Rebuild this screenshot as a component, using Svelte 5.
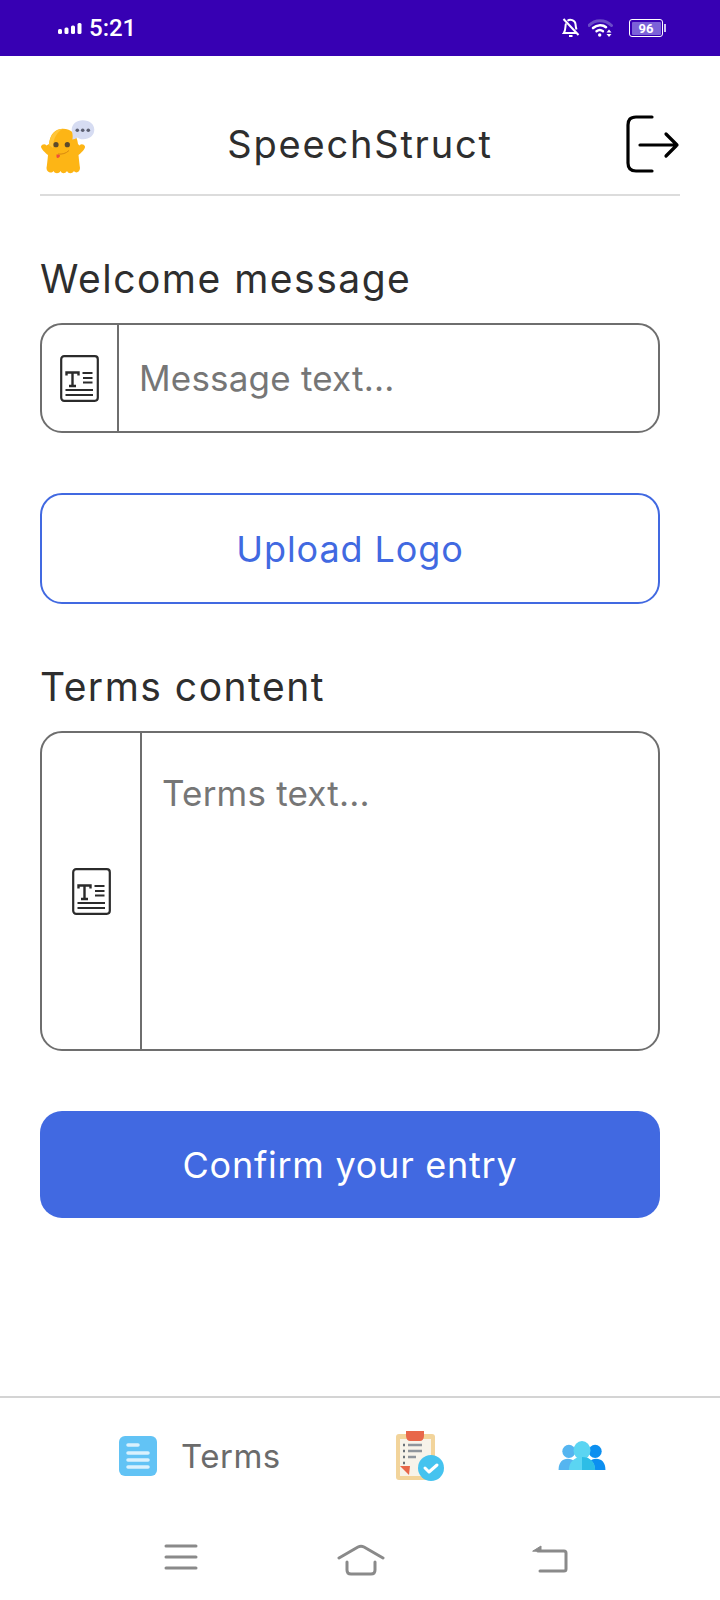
<script lang="ts">
	let message = $state('');
	let terms = $state('');
</script>

{#snippet textIcon()}
	<svg class="text-icon" viewBox="0 0 39 47" width="39" height="47" fill="none" stroke="#2b2b2b">
		<rect x="1.2" y="1.2" width="36.600" height="44.600" rx="3" stroke-width="2.200" />
		<path d="M6.500 20.500v-3h12v3M12.500 17.500v13.500M9 31h7" stroke-width="2.400" />
		<path d="M22.500 18h10M23 23h9.500M23 27.500h9.500M5.500 35h27.500M5.500 40h27.500" stroke-width="2" />
	</svg>
{/snippet}

<div class="screen">
	<div class="status-bar">
		<div class="status-left">
			<svg width="24" height="12" viewBox="0 0 24 12" fill="#fff">
				<rect x="0" y="7" width="4" height="5" rx="1.500" />
				<rect x="6.500" y="5.500" width="4" height="6.500" rx="1.500" />
				<rect x="13" y="3.500" width="4" height="8.500" rx="1.500" />
				<rect x="19.500" y="1" width="4" height="11" rx="1.500" />
			</svg>
			<span class="time">5:21</span>
		</div>
		<div class="status-right">
			<svg width="18" height="20" viewBox="0 0 18 20" fill="none" stroke="#fff" stroke-width="2">
				<path d="M4 5.500C3 8 4 12 1.800 15h13" />
				<path d="M5.500 2.800C8 .8 13 2 13.500 6c.2 2 .3 3.600 1 5.500" />
				<path d="M1.500 1l15 16" />
				<path d="M7 18h3.500" />
			</svg>
			<svg class="wifi" width="26" height="20" viewBox="0 0 26 20" fill="none" stroke-linecap="round">
				<path d="M1 7.500C7 1 17 1 23.500 7.500" stroke="#6a4bc8" stroke-width="3" />
				<path d="M5 10c4-3.600 10-3.600 13 -.8" stroke="#fff" stroke-width="2.600" />
				<path d="M8.500 13.200c2-1.600 4.500-1.600 6.500 0" stroke="#fff" stroke-width="2.400" />
				<circle cx="11.700" cy="17" r="1.700" fill="#fff" />
				<path d="M21 11.500l2.500 3h-5zM21 19l2.500-3h-5z" fill="#fff" />
			</svg>
			<div class="battery">
				<div class="battery-body"><span>96</span></div>
				<div class="battery-tip"></div>
			</div>
		</div>
	</div>

	<main>
		<header>
			<svg class="logo" width="56" height="56" viewBox="0 0 56 56">
				<path d="M9 26C10 16 15 10.700 23 10.700C31 10.700 37 16 38 26L39.500 27.500C41 25.500 44 26 45 28.500C45.500 31 41 35 38.500 37C39 42 39.500 47 40 50C40 54 36 56 34 53C32 56 28.500 56 27 53C25 56 22 56 20.500 53C19 56 15 56 13.500 53C11.500 56 6.500 54.500 6.500 50C7 47 7.500 42 8 37C5.500 35 1 31 1 28.500C2 26 5 25.500 6.500 27.500Z" fill="#fdb515" />
				<path d="M9 27C10 17 15 11 23 10.700C17 14 13 20 13 30z" fill="#ffc63a" />
				<circle cx="16" cy="26.700" r="2.600" fill="#5b4a2c" />
				<circle cx="27.300" cy="26.700" r="2.600" fill="#5b4a2c" />
				<path d="M18 36c4 .5 8-.5 11-3.500" stroke="#d98a10" stroke-width="1" fill="none" />
				<path d="M16.500 36.500c2 0 3.500 0 3.500 1 0 2-3 3.500-3.500 1.500z" fill="#ef4e3a" />
				<path d="M31.700 12c0-6 5-9.700 11-9.700 7 0 11.600 4 11.600 9.500 0 5.700-5 9.500-11 9.500-3 0-4.500-.8-6-1.800-1.500 1-3.500 2-5 2 .6-2 .6-4 -.6-9.500z" fill="#d6dcf2" />
				<circle cx="37.300" cy="12.300" r="1.800" fill="#5c6072" />
				<circle cx="42.700" cy="12.300" r="1.800" fill="#5c6072" />
				<circle cx="48.300" cy="12.300" r="1.800" fill="#5c6072" />
			</svg>
			<h1>SpeechStruct</h1>
			<svg class="logout" width="56" height="58" viewBox="0 0 56 58" fill="none" stroke="#000" stroke-width="3.200" stroke-linecap="round" stroke-linejoin="round">
				<path d="M28 2H12C6 2 4 5 4 10v38c0 5 2 8 8 8h16" />
				<path d="M16 30h37M42 19l11 11-11 11" />
			</svg>
		</header>

		<label class="field-label" for="welcome">Welcome message</label>
		<div class="input-box">
			<div class="icon-cell">{@render textIcon()}</div>
			<input id="welcome" placeholder="Message text..." bind:value={message} />
		</div>

		<button class="upload" type="button">Upload Logo</button>

		<label class="field-label terms-label" for="terms">Terms content</label>
		<div class="input-box textarea-box">
			<div class="icon-cell">{@render textIcon()}</div>
			<textarea id="terms" placeholder="Terms text..." bind:value={terms}></textarea>
		</div>

		<button class="confirm" type="button">Confirm your entry</button>
	</main>

	<nav class="tabs">
		<div class="tab tab-terms">
			<svg width="38" height="40" viewBox="0 0 38 40">
				<rect x="0" y="0" width="38" height="40" rx="6" fill="#62c3f5" />
				<path d="M9 9h10M9 17h20M9 24h20M9 31h20" stroke="#d9f1fd" stroke-width="3.500" stroke-linecap="round" />
			</svg>
			<span>Terms</span>
		</div>
		<svg class="tab-review" width="50" height="50" viewBox="0 0 50 50">
			<rect x="2" y="3" width="39" height="46" rx="3" fill="#f2d49b" />
			<rect x="6" y="8" width="31" height="37" fill="#f7f3ea" />
			<path d="M12 0h18v5c0 3-2 5-4 5h-10c-2 0-4-2-4-5z" fill="#e8674a" />
			<path d="M14 14h14M14 20h14M14 26h8" stroke="#8f959c" stroke-width="2.500" />
			<path d="M9 14h2M9 20h2M9 26h2M9 32h2" stroke="#69727a" stroke-width="2.500" />
			<path d="M6 35l10 0-1 9z" fill="#e8674a" />
			<circle cx="37" cy="37" r="13" fill="#45c3ef" />
			<path d="M31 37l4 4 8-7" stroke="#fff" stroke-width="3" fill="none" stroke-linecap="round" stroke-linejoin="round" />
		</svg>
		<svg class="tab-people" width="48" height="30" viewBox="0 0 50 32">
			<path d="M0 31c0-8 4-12 10-12 3 0 5 1 7 3l-1 9z" fill="#55b5f0" />
			<path d="M50 31c0-8-4-12-10-12-3 0-5 1-7 3l1 9z" fill="#0c8ff0" />
			<circle cx="11" cy="11" r="7" fill="#55b5f0" />
			<circle cx="39" cy="11" r="7" fill="#0c8ff0" />
			<ellipse cx="25" cy="10" rx="9" ry="10" fill="#5bd5f2" />
			<path d="M11 31c0-9 6-14 14-14s14 5 14 14z" fill="#5bd5f2" />
			<path d="M25 17c8 0 14 5 14 14H25z" fill="#2dbde6" />
		</svg>
	</nav>

	<div class="system-nav">
		<svg width="34" height="28" viewBox="0 0 34 28" stroke="#8a8a8a" stroke-width="3" stroke-linecap="round">
			<path d="M2 2h30M2 13h30M2 24h30" />
		</svg>
		<svg class="home" width="48" height="32" viewBox="0 0 48 32" fill="none" stroke="#8a8a8a" stroke-width="3" stroke-linecap="round" stroke-linejoin="round">
			<path d="M2 14L21 3q3-1.500 6 0l19 11" />
			<path d="M10 18v8q0 4 4 4h20q4 0 4-4v-8" />
		</svg>
		<svg class="back" width="36" height="30" viewBox="0 0 36 30" fill="none" stroke="#8a8a8a" stroke-width="3" stroke-linecap="round" stroke-linejoin="round">
			<path d="M6 7h26q2 0 2 2v16q0 2-2 2H8" />
			<path d="M1 7l8-5v5z" fill="#8a8a8a" stroke-width="1" />
		</svg>
	</div>
</div>

<style>
	:global(body) {
		background: #fff;
	}

	.screen {
		width: 720px;
		height: 1600px;
		display: flex;
		flex-direction: column;
		overflow: hidden;
		font-family: Inter, 'Open Sans', sans-serif;
		color: #2e2e2e;
	}

	.status-bar {
		height: 56px;
		flex: none;
		background: #3700b3;
		display: flex;
		justify-content: space-between;
		align-items: center;
		padding: 0 54px 0 58px;
		color: #fff;
		box-sizing: border-box;
	}

	.status-left {
		display: flex;
		align-items: center;
		gap: 7px;
	}

	.time {
		font-family: Roboto, sans-serif;
		font-size: 24px;
		font-weight: 500;
	}

	.status-right {
		display: flex;
		align-items: center;
		gap: 8px;
	}

	.battery {
		display: flex;
		align-items: center;
		margin-left: 7px;
	}

	.battery-body {
		width: 29px;
		height: 13px;
		border: 1.5px solid #fff;
		border-radius: 3px;
		padding: 1.5px;
		box-sizing: content-box;
		display: flex;
	}

	.battery-body span {
		flex: 1;
		background: #7c62d8;
		border-radius: 1px;
		font-family: Roboto, sans-serif;
		font-size: 13px;
		font-weight: 700;
		line-height: 13px;
		text-align: center;
	}

	.battery-tip {
		width: 2px;
		height: 8px;
		background: #cfc4ef;
		margin-left: 1px;
	}

	main {
		flex: 1;
		padding: 0 40px;
		display: flex;
		flex-direction: column;
		align-items: flex-start;
	}

	header {
		width: 640px;
		height: 140px;
		flex: none;
		box-sizing: border-box;
		padding-top: 58px;
		border-bottom: 2px solid #dcdcdc;
		display: flex;
		justify-content: space-between;
		align-items: flex-start;
	}

	.logo {
		margin-top: 4px;
	}

	.logout {
		margin-top: 1px;
	}

	h1 {
		margin: 1px 0 0;
		font-size: 38px;
		font-weight: 400;
		line-height: 58px;
		letter-spacing: 1.8px;
	}

	.field-label {
		margin-top: 60px;
		font-size: 39px;
		line-height: 46px;
		letter-spacing: 1.5px;
		height: 46px;
	}

	.terms-label {
		margin-top: 60px;
	}

	.input-box {
		width: 620px;
		height: 110px;
		margin-top: 21px;
		box-sizing: border-box;
		border: 2px solid #6e6e6e;
		border-radius: 22px;
		display: flex;
		overflow: hidden;
	}

	.icon-cell {
		flex: none;
		width: 75px;
		border-right: 2px solid #6e6e6e;
		display: flex;
		align-items: center;
		justify-content: center;
	}

	input,
	textarea {
		flex: 1;
		min-width: 0;
		border: none;
		outline: none;
		background: none;
		padding: 0 20px;
		font: inherit;
		font-size: 35px;
		letter-spacing: 0.2px;
		color: #2e2e2e;
		resize: none;
	}

	input::placeholder,
	textarea::placeholder {
		color: #767676;
		opacity: 1;
	}

	.textarea-box {
		height: 320px;
	}

	.textarea-box .icon-cell {
		width: 98px;
	}

	textarea {
		padding-top: 38px;
		line-height: 44px;
	}

	.upload,
	.confirm {
		width: 620px;
		font: inherit;
		font-size: 36px;
		border-radius: 22px;
		box-sizing: border-box;
		cursor: pointer;
	}

	.upload {
		height: 111px;
		margin-top: 60px;
		letter-spacing: 0.9px;
		background: #fff;
		border: 2px solid #4169e1;
		color: #4169e1;
	}

	.confirm {
		height: 107px;
		margin-top: 60px;
		letter-spacing: 0.75px;
		background: #4169e1;
		border: none;
		color: #fff;
	}

	.tabs {
		height: 121px;
		flex: none;
		box-sizing: border-box;
		border-top: 2px solid #d4d4d4;
		display: flex;
		align-items: center;
		padding: 0 0 3px 119px;
	}

	.tab-terms {
		display: flex;
		align-items: center;
		gap: 24px;
		font-size: 33px;
		letter-spacing: 0.5px;
		color: #6b6b6b;
	}

	.tab-review {
		margin-left: 113px;
	}

	.tab-people {
		margin-left: 114px;
	}

	.system-nav {
		height: 83px;
		flex: none;
		display: flex;
		align-items: flex-start;
		padding: 27px 0 0 164px;
		box-sizing: border-box;
	}

	.home {
		margin-left: 139px;
	}

	.back {
		margin-left: 147px;
	}
</style>
